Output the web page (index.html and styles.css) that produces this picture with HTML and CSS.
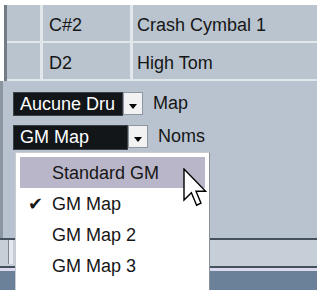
FILE: index.html
```html
<!DOCTYPE html>
<html lang="fr">
<head>
    <meta charset="UTF-8">
    <title>Drum Map</title>
    <link rel="stylesheet" href="styles.css">
</head>
<body>
    <div class="screen">
        <div class="grid">
            <div class="row">
                <div class="cell"></div>
                <div class="cell">C#2</div>
                <div class="cell">Crash Cymbal 1</div>
            </div>
            <div class="row">
                <div class="cell"></div>
                <div class="cell">D2</div>
                <div class="cell">High Tom</div>
            </div>
        </div>

        <div class="panel">
            <div class="field">
                <div class="combo"><span class="value">Aucune Dru</span></div>
                <span class="arrow"></span>
                <span class="label">Map</span>
            </div>
            <div class="field">
                <div class="combo wide"><span class="value">GM Map</span></div>
                <span class="arrow"></span>
                <span class="label">Noms</span>
            </div>
        </div>

        <div class="bars">
            <div class="bar dark"></div>
            <div class="bar light"><span class="stub"></span></div>
            <div class="bar dark"></div>
            <div class="bar pale"></div>
            <div class="bar blue"></div>
        </div>

        <!-- menu deroulant ouvert -->
        <ul class="menu">
            <li class="item active">Standard GM</li>
            <li class="item checked">GM Map</li>
            <li class="item">GM Map 2</li>
            <li class="item">GM Map 3</li>
        </ul>

        <svg class="cursor" width="24" height="40" viewBox="0 0 12 20">
            <path d="M0.5 0.5 L0.5 16 L4.2 12.4 L6.8 18.6 L9 17.6 L6.5 11.6 L11.3 11.6 Z" fill="#fff" stroke="#000" stroke-width="0.7" stroke-linejoin="miter"/>
        </svg>
    </div>
</body>
</html>
```

FILE: styles.css
```css
/* Base */
body {
    margin: 0;
    font-family: "Liberation Sans", Arial, sans-serif;
    font-size: 18px;
    color: #161616;
    background: #fff;
}

.screen {
    position: relative;
    width: 317px;
    height: 290px;
    overflow: hidden;
}

/* Tableau des notes */
.grid {
    margin: 5px 0 0 4px;
    border-left: 3px solid #737c86;
    background: #b9c4cf;
}
.row {
    display: grid;
    grid-template-columns: 36px 90px 1fr;
    height: 36px;
    border-bottom: 2px solid #e2e7ec;
}
.cell {
    display: flex;
    align-items: center;
    padding: 4px 0 0 6px;
    border-right: 3px solid #e2e7ec;
}
.cell:last-child {
    border-right: none;
    padding-left: 4px;
}

/* Panneau */
.panel {
    height: 157px;
    background: #b8c3cf;
    padding: 11px 0 0 13px;
    box-sizing: border-box;
    display: flex;
    flex-direction: column;
    gap: 9px;
    border-left: 3px solid #8c96a1;
}
.field {
    display: flex;
    align-items: flex-start;
    margin-left: -3px;
}
.combo {
    width: 110px;
    height: 24px;
    background: #121619;
    color: #fff;
    overflow: hidden;
    white-space: nowrap;
    display: flex;
    align-items: center;
    padding-left: 7px;
    box-sizing: border-box;
    box-shadow: inset 0 0 0 1px #3a4047;
}
.combo.wide {
    width: 115px;
    height: 25px;
}
.arrow {
    width: 20px;
    height: 23px;
    background: #f2f2f2;
    border: 1px solid #8d969f;
    box-sizing: border-box;
    position: relative;
}
.arrow::after {
    content: "";
    position: absolute;
    left: 5px;
    top: 11px;
    border-left: 4px solid transparent;
    border-right: 4px solid transparent;
    border-top: 5px solid #000;
}
.label {
    margin-left: 10px;
    line-height: 22px;
}

/* Bandes du bas */
.bar.dark { height: 2px; background: #45515d; }
.bar.light {
    height: 26px;
    background: #c6ced8;
    padding-left: 8px;
    box-sizing: border-box;
}
.bar.pale { height: 3px; background: #dcd9ef; }
.bar.blue { height: 30px; background: #6b8099; }
.stub {
    display: block;
    width: 5px;
    height: 24px;
    background: #e4e8ed;
    border-left: 1px solid #7d8791;
    box-sizing: border-box;
}

/* Menu */
.menu {
    position: absolute;
    left: 15px;
    top: 152px;
    width: 195px;
    height: 150px;
    margin: 0;
    padding: 4px 4px;
    box-sizing: border-box;
    list-style: none;
    background: #fff;
    border: 1px solid #c9cdd2;
    border-right-color: #8a9097;
}
.item {
    height: 31px;
    line-height: 33px;
    padding-left: 32px;
    position: relative;
}
.item.active {
    background: #bab6ca;
}
.item.checked::before {
    content: "\2714";
    position: absolute;
    left: 8px;
    font-size: 18px;
}

.cursor {
    position: absolute;
    left: 183px;
    top: 168px;
}
```
